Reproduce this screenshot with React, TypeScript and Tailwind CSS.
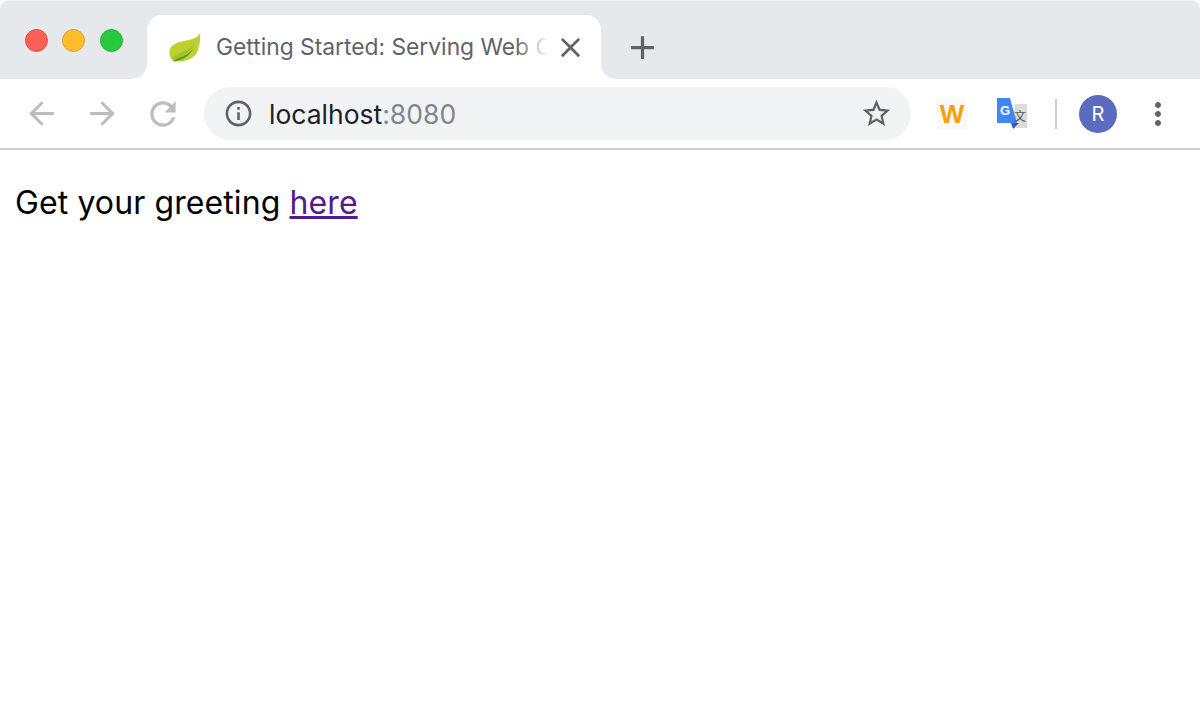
import { MdAdd, MdArrowBack, MdArrowForward, MdClose, MdInfoOutline, MdMoreVert, MdRefresh, MdStarBorder } from "react-icons/md";

function SpringLeaf() {
  return (
    <svg width="32" height="30" viewBox="0 0 32 30" className="shrink-0 blur-[0.4px]">
      <path d="M31 1C29 5 25 7 20 8C12 9.500 1.500 11 0.500 19C0.200 24 1.500 27 4 29C12 30.500 24 29 28 20C30.500 14 32 7 31 1Z" fill="#bdd02f" />
      <path d="M3 26C9 20 19 20 25.500 11C24 19 15 24 6 28.500Z" fill="#a5c22c" />
      <path d="M4 29C10 25 19 24.500 24.500 16C21 24 13 28 5.500 29.500Z" fill="#4f9b36" />
    </svg>
  );
}

function WExtension() {
  return (
    <div className="flex h-[30px] w-[30px] items-center justify-center bg-[#f9f9f9]">
      <span className="font-['Liberation_Sans',sans-serif] text-[26px] leading-none font-bold text-[#ff9d0a]">W</span>
    </div>
  );
}

function TranslateExtension() {
  return (
    <svg width="32" height="33" viewBox="0 0 32 33">
      <path d="M19 7H31V31H17Z" fill="#dcdcdc" />
      <path d="M1 1H14L21 26H1Z" fill="#4285f4" />
      <path d="M15 26H23L17 32Z" fill="#3b54c4" />
      <text x="4" y="18" fontFamily="Liberation Sans, sans-serif" fontSize="13" fontWeight="700" fill="#fff">G</text>
      <text x="18" y="24" fontFamily="Noto Sans CJK SC, sans-serif" fontSize="12" fill="#555">文</text>
    </svg>
  );
}

export default function App() {
  return (
    <div className="h-[709px] w-[1200px] overflow-hidden bg-white font-['Inter',sans-serif]">
      <div className="flex h-[79px]">
        <div className="flex w-[147px] items-start gap-[14.500px] rounded-tl-[8px] rounded-br-[15px] border-t border-[#eef0f2] bg-[#e6e9ec] pt-[28px] pl-[24.500px]">
          <span className="h-[23px] w-[23px] rounded-full border border-[#e9493f] bg-[#ff5f57]" />
          <span className="h-[23px] w-[23px] rounded-full border border-[#e0a220] bg-[#ffbd2e]" />
          <span className="h-[23px] w-[23px] rounded-full border border-[#1fb23a] bg-[#28c93f]" />
        </div>
        <div className="border-t border-[#eef0f2] bg-[#e6e9ec]">
          <div className="mt-[14px] flex h-[64px] w-[454px] items-center rounded-t-[15px] bg-white pr-[14px] pl-[22px]">
            <SpringLeaf />
            <div className="relative ml-[15px] w-[332px] overflow-hidden whitespace-nowrap text-[22.800px] text-[#5f6368]">
              Getting Started: Serving Web Content
              <div className="absolute inset-y-0 right-0 w-[32px] bg-gradient-to-r from-transparent to-white" />
            </div>
            <MdClose size={33} className="ml-auto text-[#5f6368]" />
          </div>
        </div>
        <div className="flex flex-1 items-start rounded-tr-[8px] rounded-bl-[15px] border-t border-[#eef0f2] bg-[#e6e9ec] pt-[27px] pl-[22px]">
          <MdAdd size={39} className="text-[#5f6368]" />
        </div>
      </div>
      <div className="flex h-[71px] items-center border-b-2 border-[#cfcfcf] pl-[23px]">
        <MdArrowBack size={37} className="shrink-0 text-[#bdbdbd]" />
        <MdArrowForward size={37} className="ml-[23.500px] shrink-0 text-[#bdbdbd]" />
        <MdRefresh size={38} className="ml-[23.500px] shrink-0 text-[#bdbdbd]" />
        <div className="ml-[22px] flex h-[53px] w-[707px] shrink-0 items-center rounded-full bg-[#f1f3f4] pr-[18.500px] pl-[18.500px]">
          <MdInfoOutline size={31} className="shrink-0 text-[#5f6368]" />
          <span className="ml-[15.500px] pt-[2px] text-[26.500px] text-[#202124]">
            localhost<span className="text-[#80868b]">:8080</span>
          </span>
          <MdStarBorder size={33} className="ml-auto shrink-0 text-[#5f6368]" />
        </div>
        <div className="ml-[26px] shrink-0">
          <WExtension />
        </div>
        <div className="ml-[29px] shrink-0">
          <TranslateExtension />
        </div>
        <div className="ml-[27px] h-[30px] w-[2px] shrink-0 bg-[#d0d0d0]" />
        <div className="ml-[22px] flex h-[38px] w-[38px] shrink-0 items-center justify-center rounded-full bg-[#5c6bc0] text-[20px] text-white">R</div>
        <MdMoreVert size={36} className="ml-[23px] shrink-0 text-[#5f6368]" />
      </div>
      <p className="mt-[34px] ml-[15px] text-[32px] leading-[38px] tracking-[0.1px] text-black">
        Get your greeting{" "}
        <a href="#" className="text-[#551a8b] underline">here</a>
      </p>
    </div>
  );
}
